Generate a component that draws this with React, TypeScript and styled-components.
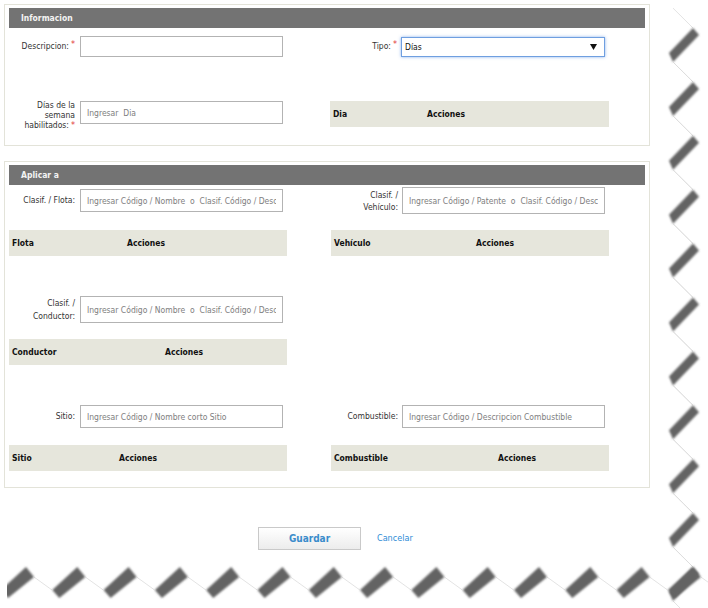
import React from "react";
import styled, { createGlobalStyle } from "styled-components";

const GlobalStyle = createGlobalStyle`
  html, body { margin: 0; padding: 0; background: #ffffff; }
  body { font-family: "DejaVu Sans Condensed", "DejaVu Sans", sans-serif; font-size: 8.5px; color: #333333; }
  * { box-sizing: border-box; }
`;

const Page = styled.div`
  position: relative;
  width: 708px;
  height: 608px;
  padding: 4px;
  overflow: hidden;
`;

const Panel = styled.section<{ $mt?: number; $pb: number }>`
  width: 646px;
  margin-top: ${(p) => p.$mt ?? 0}px;
  border: 1px solid #e3e3d9;
  padding: 3px 4px ${(p) => p.$pb}px 4px;
  background: #ffffff;
`;

const PanelHeader = styled.div`
  height: 20px;
  line-height: 20px;
  background: #737373;
  color: #f4f4f4;
  font-weight: bold;
  font-size: 8.5px;
  padding-left: 12px;
`;

const Pair = styled.div<{ $mt: number; $h: number; $align?: string }>`
  display: grid;
  grid-template-columns: 322px 314px;
  margin-top: ${(p) => p.$mt}px;
  height: ${(p) => p.$h}px;
  align-items: ${(p) => p.$align ?? "center"};
`;

const Field = styled.div<{ $align?: string }>`
  display: flex;
  align-items: ${(p) => p.$align ?? "center"};
`;

const Label = styled.label<{ $w: number; $gap: number; $lh?: number; $mt?: number }>`
  width: ${(p) => p.$w}px;
  margin-right: ${(p) => p.$gap}px;
  margin-top: ${(p) => p.$mt ?? 0}px;
  flex-shrink: 0;
  text-align: right;
  color: #333333;
  line-height: ${(p) => p.$lh ?? 11}px;
  white-space: nowrap;
`;

const Req = styled.span<{ $raise?: number }>`
  color: #e23a3a;
  font-size: 9px;
  line-height: 1;
  position: relative;
  top: ${(p) => -(p.$raise ?? 2)}px;
  margin-left: 2px;
`;

const TextInput = styled.input<{ $h: number }>`
  width: 203px;
  height: ${(p) => p.$h}px;
  border: 1px solid #b3b3b3;
  padding: 0 6px;
  font-family: inherit;
  font-size: 8.5px;
  color: #333333;
  background: #ffffff;
  outline: none;
  &::placeholder { color: #7e7e7e; opacity: 1; }
`;

const Select = styled.div`
  width: 204px;
  height: 20px;
  border: 1px solid #6f9fe0;
  box-shadow: 0 0 3px rgba(90, 145, 230, 0.7);
  display: flex;
  align-items: center;
  justify-content: space-between;
  padding: 0 7px 0 3px;
  color: #111111;
  background: #ffffff;
`;

const TableHead = styled.div<{ $w: number; $ml?: number }>`
  width: ${(p) => p.$w}px;
  margin-left: ${(p) => p.$ml ?? 0}px;
  height: 26px;
  background: #e6e6dc;
  display: flex;
  align-items: center;
  font-weight: bold;
  color: #111111;
`;

const HeadCell = styled.div<{ $w?: number }>`
  padding-left: 3px;
  width: ${(p) => (p.$w ? `${p.$w}px` : "auto")};
  flex-shrink: 0;
`;

const ButtonBar = styled.div`
  display: flex;
  align-items: center;
  margin-top: 40px;
  padding-left: 254px;
  gap: 16px;
`;

const SaveButton = styled.button`
  width: 103px;
  height: 23px;
  border: 1px solid #c9c9c9;
  background: linear-gradient(#ffffff, #ececec);
  color: #3b8ccb;
  font-family: "DejaVu Sans Condensed", "DejaVu Sans", sans-serif;
  font-size: 10px;
  font-weight: bold;
  padding: 0;
  margin-top: -1px;
`;

const CancelLink = styled.a`
  color: #2d8cd6;
  font-size: 9px;
  text-decoration: none;
  margin-top: -3px;
`;

const Tear = styled.svg`
  position: absolute;
  left: 0;
  top: 0;
  pointer-events: none;
`;

const Arrow = () => (
  <svg width="7" height="6" viewBox="0 0 7 6">
    <polygon points="0,0 7,0 3.5,6" fill="#111" />
  </svg>
);

const TornEdge = () => {
  const rights = Array.from({ length: 11 }, (_, k) => 28 + 53.9 * k);
  const bottoms = Array.from({ length: 14 }, (_, k) => 26 + 51.3 * k);
  return (
    <Tear width="708" height="608" viewBox="0 0 708 608">
      <defs>
        <filter id="blur" x="-20%" y="-20%" width="140%" height="140%">
          <feGaussianBlur stdDeviation="1" />
        </filter>
        <clipPath id="clip">
          <rect x="7" y="6" width="701" height="602" />
        </clipPath>
      </defs>
      <g clipPath="url(#clip)">
        {rights.map((y, i) => (
          <g key={`r${i}`}>
            <line x1={673} y1={y + 34} x2={693} y2={y + 53.9} stroke="#dcdcdc" strokeWidth="0.8" />
            <line x1={673} y1={y + 34 - 53.9} x2={693} y2={y} stroke="#dcdcdc" strokeWidth="0.8" />
            <polygon
              points={`693,${y} 669,${y + 25} 673,${y + 34} 699,${y + 7}`}
              fill="#636363"
              filter="url(#blur)"
            />
          </g>
        ))}
        {bottoms.map((x, i) => (
          <g key={`b${i}`}>
            <line x1={x + 8} y1={577} x2={x + 26} y2={590} stroke="#dcdcdc" strokeWidth="0.8" />
            <polygon
              points={`${x - 25},590 ${x},567 ${x + 8},577 ${x - 18},598`}
              fill="#636363"
              filter="url(#blur)"
            />
          </g>
        ))}
      </g>
    </Tear>
  );
};

const PH_NOMBRE = "Ingresar Código / Nombre \u00a0o \u00a0Clasif. Código / Descripcion";
const PH_PATENTE = "Ingresar Código / Patente \u00a0o \u00a0Clasif. Código / Descripcion";

export default function App() {
  return (
    <>
      <GlobalStyle />
      <Page>
        <Panel $pb={17}>
          <PanelHeader>Informacion</PanelHeader>
          <Pair $mt={8} $h={21}>
            <Field>
              <Label $w={66} $gap={5}>
                Descripcion:<Req>*</Req>
              </Label>
              <TextInput $h={21} />
            </Field>
            <Field>
              <Label $w={66} $gap={4}>
                Tipo:<Req>*</Req>
              </Label>
              <Select>
                <span>Días</span>
                <Arrow />
              </Select>
            </Field>
          </Pair>
          <Pair $mt={44} $h={27} $align="start">
            <Field $align="flex-start">
              <Label $w={66} $gap={5} $lh={10} $mt={-1}>
                Días de la
                <br />
                semana
                <br />
                habilitados:<Req $raise={0}>*</Req>
              </Label>
              <TextInput $h={23} placeholder={"Ingresar \u00a0Dia"} />
            </Field>
            <TableHead $w={279} $ml={-1}>
              <HeadCell $w={94}>Dia</HeadCell>
              <HeadCell>Acciones</HeadCell>
            </TableHead>
          </Pair>
        </Panel>

        <Panel $mt={15} $pb={16}>
          <PanelHeader>Aplicar a</PanelHeader>
          <Pair $mt={2} $h={27}>
            <Field>
              <Label $w={66} $gap={5}>
                Clasif. / Flota:
              </Label>
              <TextInput $h={23} placeholder={PH_NOMBRE} />
            </Field>
            <Field>
              <Label $w={67} $gap={4} $lh={12}>
                Clasif. /
                <br />
                Vehículo:
              </Label>
              <TextInput $h={27} placeholder={PH_PATENTE} />
            </Field>
          </Pair>
          <Pair $mt={16} $h={26}>
            <TableHead $w={278}>
              <HeadCell $w={115}>Flota</HeadCell>
              <HeadCell>Acciones</HeadCell>
            </TableHead>
            <TableHead $w={278}>
              <HeadCell $w={142}>Vehículo</HeadCell>
              <HeadCell>Acciones</HeadCell>
            </TableHead>
          </Pair>
          <Pair $mt={40} $h={27}>
            <Field>
              <Label $w={66} $gap={5} $lh={13}>
                Clasif. /
                <br />
                Conductor:
              </Label>
              <TextInput $h={27} placeholder={PH_NOMBRE} />
            </Field>
            <div />
          </Pair>
          <Pair $mt={16} $h={26}>
            <TableHead $w={278}>
              <HeadCell $w={153}>Conductor</HeadCell>
              <HeadCell>Acciones</HeadCell>
            </TableHead>
            <div />
          </Pair>
          <Pair $mt={40} $h={23}>
            <Field>
              <Label $w={66} $gap={5}>
                Sitio:
              </Label>
              <TextInput $h={23} placeholder="Ingresar Código / Nombre corto Sitio" />
            </Field>
            <Field>
              <Label $w={67} $gap={4}>
                Combustible:
              </Label>
              <TextInput $h={23} placeholder="Ingresar Código / Descripcion Combustible" />
            </Field>
          </Pair>
          <Pair $mt={17} $h={26}>
            <TableHead $w={278}>
              <HeadCell $w={107}>Sitio</HeadCell>
              <HeadCell>Acciones</HeadCell>
            </TableHead>
            <TableHead $w={278}>
              <HeadCell $w={164}>Combustible</HeadCell>
              <HeadCell>Acciones</HeadCell>
            </TableHead>
          </Pair>
        </Panel>

        <ButtonBar>
          <SaveButton type="button">Guardar</SaveButton>
          <CancelLink href="#">Cancelar</CancelLink>
        </ButtonBar>
        <TornEdge />
      </Page>
    </>
  );
}
